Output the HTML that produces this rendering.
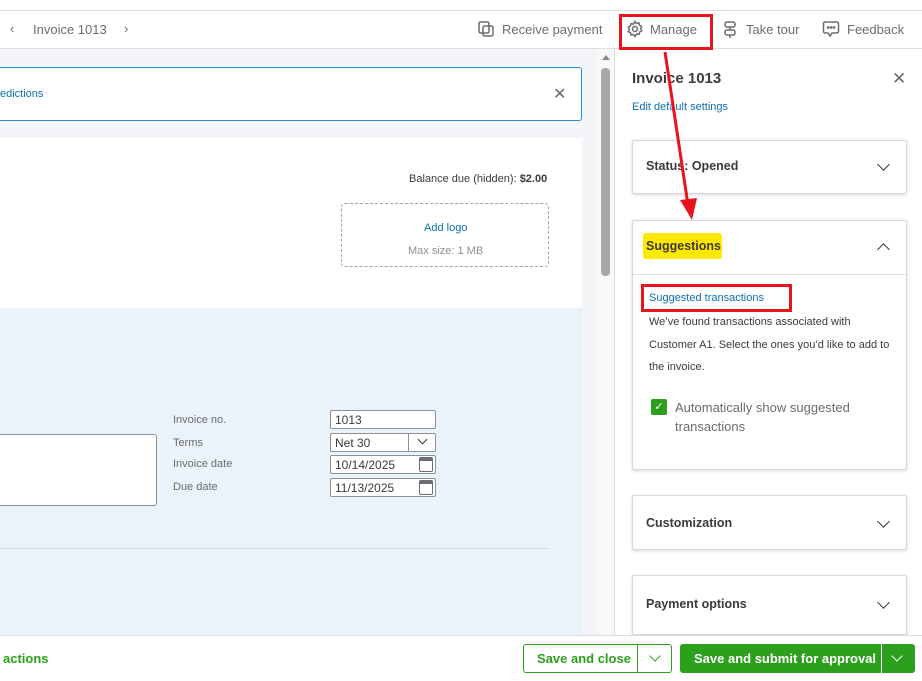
<!DOCTYPE html>
<html><head><style>
*{box-sizing:border-box;margin:0;padding:0}
body{width:922px;height:681px;overflow:hidden;position:relative;font-family:"Liberation Sans",Arial,sans-serif;background:#fff;color:#393a3d}
.a{position:absolute}
.t{font-size:13px;color:#6b6c72}
.card{position:absolute;left:632px;width:275px;background:#fff;border:1px solid #d4d7dc;border-radius:2px;box-shadow:0 1px 3px rgba(0,0,0,.15)}
.ch{position:absolute;right:18px;width:9px;height:9px;border-right:1.8px solid #393a3d;border-bottom:1.8px solid #393a3d;transform:rotate(45deg)}
.h{position:absolute;left:13px;font-size:12.5px;font-weight:bold;color:#393a3d}
.in{position:absolute;left:330px;width:106px;height:19px;border:1px solid #8d9096;border-radius:2px;background:#fff;font-size:12px;padding:2px 4px;color:#393a3d}
.lb{position:absolute;left:173px;font-size:11px;color:#6b6c72}
.cal{position:absolute;right:2px;top:1px;width:14px;height:15px;border:1.5px solid #6b6c72;border-radius:2px;border-top-width:4px}
</style></head><body>
<div class="a" style="left:0;top:10px;width:922px;height:1px;background:#dcdee2"></div>
<div class="a" style="left:0;top:48px;width:922px;height:1px;background:#dcdee2"></div>
<div class="a t" style="left:10px;top:21px;font-size:13px">‹</div>
<div class="a t" style="left:33px;top:22px">Invoice 1013</div>
<div class="a t" style="left:124px;top:21px">›</div>
<svg class="a" style="left:477px;top:20px" width="18" height="18" viewBox="0 0 18 18" fill="none" stroke="#6b6c72" stroke-width="1.5"><rect x="2" y="2" width="10" height="11" rx="1.5"/><rect x="6" y="6" width="10" height="10" rx="1.5"/></svg>
<div class="a t" style="left:502px;top:22px">Receive payment</div>
<svg class="a" style="left:626px;top:20px" width="18" height="18" viewBox="0 0 18 18" fill="none" stroke="#6b6c72" stroke-width="1.5"><circle cx="9" cy="9" r="2.5"/><path d="M9 1.5l1.5 2 2.4-.6.6 2.4 2.2 1.2-1 2.2 1 2.3-2.2 1.1-.6 2.4-2.4-.6L9 16.5l-1.5-2-2.4.6-.6-2.4-2.2-1.1 1-2.3-1-2.2 2.2-1.2.6-2.4 2.4.6z"/></svg>
<div class="a t" style="left:650px;top:22px">Manage</div>
<div class="a" style="left:619px;top:14px;width:94px;height:36px;border:3px solid #e8141b"></div>
<svg class="a" style="left:722px;top:20px" width="16" height="18" viewBox="0 0 16 18" fill="none" stroke="#6b6c72" stroke-width="1.5"><rect x="3" y="2" width="10" height="5" rx="2"/><rect x="3" y="10" width="10" height="5" rx="2"/><path d="M8 7v3M8 15v3"/></svg>
<div class="a t" style="left:746px;top:22px">Take tour</div>
<svg class="a" style="left:822px;top:20px" width="18" height="18" viewBox="0 0 18 18" fill="none" stroke="#6b6c72" stroke-width="1.5"><path d="M3 2h12a1.5 1.5 0 011.5 1.5v8A1.5 1.5 0 0115 13H10l-2 3-2-3H3a1.5 1.5 0 01-1.5-1.5v-8A1.5 1.5 0 013 2z"/><circle cx="6" cy="7.5" r=".6" fill="#6b6c72"/><circle cx="9" cy="7.5" r=".6" fill="#6b6c72"/><circle cx="12" cy="7.5" r=".6" fill="#6b6c72"/></svg>
<div class="a t" style="left:847px;top:22px">Feedback</div>

<div class="a" style="left:0;top:49px;width:598px;height:586px;background:#f4f5f8"></div>
<div class="a" style="left:0;top:67px;width:582px;height:54px;background:#fff;border:1px solid #2c8fcd;border-left:none;border-radius:0 3px 3px 0"></div>
<div class="a" style="left:0;top:88px;font-size:11px;color:#0d6fb0">edictions</div>
<div class="a" style="left:553px;top:84px;font-size:16px;color:#6b6c72">✕</div>
<div class="a" style="left:0;top:138px;width:582px;height:497px;background:#fff"></div>
<div class="a" style="left:0;top:308px;width:582px;height:327px;background:#eaf2fa"></div>
<div class="a" style="left:409px;top:173px;font-size:11px;color:#393a3d">Balance due (hidden): <b>$2.00</b></div>
<div class="a" style="left:341px;top:203px;width:208px;height:64px;border:1px dashed #a0a3a8;border-radius:4px"></div>
<div class="a" style="left:424px;top:222px;font-size:11px;color:#0d6fb0">Add logo</div>
<div class="a" style="left:408px;top:245px;font-size:11px;color:#8d9096">Max size: 1 MB</div>
<div class="a" style="left:0;top:434px;width:157px;height:72px;background:#fff;border:1px solid #8d9096;border-left:none;border-radius:0 3px 3px 0"></div>
<div class="lb" style="top:414px">Invoice no.</div>
<div class="lb" style="top:437px">Terms</div>
<div class="lb" style="top:458px">Invoice date</div>
<div class="lb" style="top:481px">Due date</div>
<div class="in" style="top:410px">1013</div>
<div class="in" style="top:433px">Net 30<div class="a" style="left:77px;top:0;width:1px;height:17px;background:#8d9096"></div><div class="a" style="left:88px;top:2px;width:7px;height:7px;border-right:1.3px solid #393a3d;border-bottom:1.3px solid #393a3d;transform:rotate(45deg)"></div></div>
<div class="in" style="top:455px">10/14/2025<div class="cal"></div></div>
<div class="in" style="top:478px">11/13/2025<div class="cal"></div></div>
<div class="a" style="left:0;top:548px;width:549px;height:1px;background:#d4d7dc"></div>
<div class="a" style="left:598px;top:49px;width:16px;height:586px;background:#f8f8f9"></div>
<div class="a" style="left:601px;top:68px;width:9px;height:208px;background:#a8a8a8;border-radius:4px"></div>
<div class="a" style="left:602px;top:55px;width:0;height:0;border-left:4px solid transparent;border-right:4px solid transparent;border-bottom:5px solid #888"></div>

<div class="a" style="left:614px;top:49px;width:1px;height:586px;background:#dcdee2"></div>
<div class="a" style="left:632px;top:70px;font-size:15px;font-weight:bold;color:#393a3d">Invoice 1013</div>
<div class="a" style="left:892px;top:69px;font-size:17px;color:#6b6c72">✕</div>
<div class="a" style="left:632px;top:101px;font-size:11px;color:#0d6fb0">Edit default settings</div>
<div class="card" style="top:140px;height:54px"><div class="h" style="top:18px">Status: Opened</div><div class="ch" style="top:19px"></div></div>
<div class="card" style="top:220px;height:250px">
<div class="a" style="left:10px;top:12px;width:79px;height:26px;background:#ffe900;border-radius:3px"></div>
<div class="h" style="top:18px">Suggestions</div><div class="ch" style="top:24px;transform:rotate(-135deg)"></div>
<div class="a" style="left:0;top:53px;width:273px;height:1px;background:#dcdee2"></div>
<div class="a" style="left:8px;top:63px;width:151px;height:28px;border:3px solid #e8141b"></div>
<div class="a" style="left:16px;top:71px;font-size:11px;color:#0d6fb0">Suggested transactions</div>
<div class="a" style="left:16px;top:90px;width:250px;font-size:11px;line-height:22.5px;color:#393a3d">We’ve found transactions associated with Customer A1. Select the ones you’d like to add to the invoice.</div>
<div class="a" style="left:18px;top:178px;width:16px;height:16px;background:#2ca01c;border-radius:2px;color:#fff;font-size:11px;text-align:center;line-height:16px">✓</div>
<div class="a" style="left:42px;top:177px;width:210px;font-size:13px;line-height:19px;color:#6b6c72">Automatically show suggested transactions</div>
</div>
<div class="card" style="top:495px;height:55px"><div class="h" style="top:20px">Customization</div><div class="ch" style="top:21px"></div></div>
<div class="card" style="top:575px;height:60px"><div class="h" style="top:21px">Payment options</div><div class="ch" style="top:22px"></div></div>

<div class="a" style="left:0;top:635px;width:922px;height:46px;background:#fff;border-top:1px solid #dcdee2"></div>
<div class="a" style="left:3px;top:651px;font-size:13px;font-weight:bold;color:#2ca01c">actions</div>
<div class="a" style="left:523px;top:644px;width:149px;height:29px;border:1.5px solid #2ca01c;border-radius:3px"></div>
<div class="a" style="left:537px;top:651px;font-size:13px;font-weight:bold;color:#2ca01c">Save and close</div>
<div class="a" style="left:637px;top:645px;width:1px;height:27px;background:#2ca01c"></div>
<div class="a" style="left:651px;top:652px;width:8px;height:8px;border-right:1.8px solid #2ca01c;border-bottom:1.8px solid #2ca01c;transform:rotate(45deg)"></div>
<div class="a" style="left:680px;top:644px;width:235px;height:29px;background:#2ca01c;border-radius:3px"></div>
<div class="a" style="left:694px;top:651px;font-size:13px;font-weight:bold;color:#fff">Save and submit for approval</div>
<div class="a" style="left:881px;top:644px;width:1px;height:29px;background:#fff"></div>
<div class="a" style="left:893px;top:652px;width:8px;height:8px;border-right:1.8px solid #fff;border-bottom:1.8px solid #fff;transform:rotate(45deg)"></div>

<svg class="a" style="left:0;top:0" width="922" height="681"><line x1="665" y1="52" x2="688" y2="205" stroke="#e8141b" stroke-width="3"/><polygon points="680,200 697,198 692,220" fill="#e8141b"/></svg>
</body></html>
